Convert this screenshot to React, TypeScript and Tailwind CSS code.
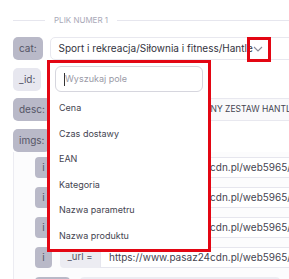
import React from 'react';

const RED = 'border-[#e30613]';

const fields = ['Cena', 'Czas dostawy', 'EAN', 'Kategoria', 'Nazwa parametru', 'Nazwa produktu'];

const UrlRow = () => (
  <div className="flex h-[21px] items-stretch gap-[8px]">
    <div className="flex w-[17px] items-center justify-center rounded-[4px] bg-[#b9b9c8] text-[10px] text-[#555566]">i</div>
    <div className="flex">
      <div className="flex w-[40px] items-center justify-center rounded-l-[4px] bg-[#ececf2] text-[9.5px] text-[#555566]">_url =</div>
      <div className="flex w-[260px] items-center border border-[#e6e6ee] bg-white pl-[8px] text-[10px] whitespace-nowrap text-[#444450]">
        https://www.pasaz24cdn.pl/web5965/products/hantle.jpg
      </div>
    </div>
  </div>
);

const Label = ({ children, light }: { children: React.ReactNode; light?: boolean }) => (
  <div
    className={`flex items-center justify-center rounded-[5px] px-[6px] text-[10px] text-[#555566] ${
      light ? 'bg-[#e7e7ef]' : 'bg-[#b9b9c8]'
    }`}
  >
    {children}
  </div>
);

export default function App() {
  return (
    <div className="relative h-[279px] w-[289px] overflow-hidden bg-white font-['Inter',sans-serif]">
      <div className="w-[420px] pl-[13px] pt-[14px]">
        {/* section header */}
        <div className="flex h-[12px] w-[276px] items-center">
          <div className="h-px w-[32px] bg-[#e6e6ee]" />
          <span className="mx-[9px] text-[8px] text-[#a9a9b8]">PLIK NUMER 1</span>
          <div className="h-px flex-1 bg-[#e6e6ee]" />
        </div>

        <div className="mt-[11px] flex h-[23px] gap-[7px]">
          <Label>cat:</Label>
          <div className="flex w-[300px] items-center rounded-[5px] border border-[#e8e8ef] px-[8px] text-[10px] whitespace-nowrap text-[#333340]">
            <span>Sport i rekreacja/Siłownia i fitness/Hantle</span>
            <svg width="10" height="6" viewBox="0 0 10 6" fill="none" stroke="#8a8a98" strokeWidth="1.1">
              <path d="M1 1l4 4 4-4" />
            </svg>
          </div>
        </div>

        <div className="mt-[8px] flex h-[23px] gap-[7px]">
          <Label light>_id:</Label>
          <div className="w-[140px] rounded-[5px] border border-[#e8e8ef]" />
        </div>

        <div className="mt-[7px] flex h-[23px] gap-[7px]">
          <Label>desc:</Label>
          <div className="flex w-[300px] items-center rounded-[5px] border border-[#e8e8ef] bg-[#f9f9fb] px-[8px] text-[8.5px] whitespace-nowrap text-[#444450]">
            HANTLE 2X12,5KG CHROM - SOLIDNY ZESTAW HANTLI
          </div>
        </div>

        <div className="mt-[8px] flex h-[23px] gap-[7px]">
          <Label>imgs:</Label>
        </div>

        <div className="flex flex-col gap-[9px] border-l border-[#ececf2] bg-[#fcfcfd] pl-[21px] pt-[5px]">
          <UrlRow />
          <UrlRow />
          <UrlRow />
          <UrlRow />
          <div className="flex h-[21px] gap-[10px]">
            <div className="w-[35px] rounded-[4px] bg-[#b9b9c8]" />
            <div className="w-[200px] rounded-[4px] bg-[#ececf2]" />
          </div>
        </div>
      </div>

      {/* annotation around chevron */}
      <div className={`absolute left-[247px] top-[37px] h-[25px] w-[24px] border-[3px] ${RED}`} />

      {/* open dropdown */}
      <div className={`absolute left-[47px] top-[60px] h-[192px] w-[164px] border-[3px] ${RED} bg-white`}>
        <div className="mx-[5px] mt-[3px] flex h-[26px] items-center rounded-[6px] border border-[#d6d6de] pl-[8px]">
          <div className="h-[13px] w-px bg-[#333]" />
          <span className="text-[9px] text-[#9a9aa6]">Wyszukaj pole</span>
        </div>
        <ul className="mt-[3px]">
          {fields.map((f) => (
            <li key={f} className="flex h-[25.5px] items-center pl-[9px] text-[9px] text-[#444450]">
              {f}
            </li>
          ))}
        </ul>
      </div>
    </div>
  );
}
